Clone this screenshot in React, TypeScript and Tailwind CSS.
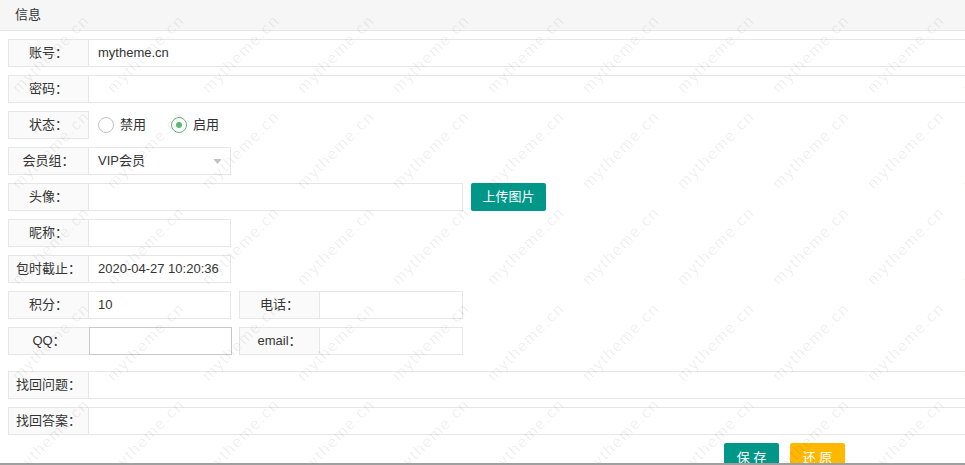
import type { ReactNode } from "react";

type FieldProps = {
  label: string;
  width: string;
  children?: ReactNode;
  focus?: boolean;
};

function Field({ label, width, children, focus }: FieldProps) {
  return (
    <div className={`flex h-[28px] shrink-0 ${width}`}>
      <div
        className={`flex h-full w-[81px] shrink-0 items-center justify-center border border-[#e6e6e6] bg-[#fafafa] ${focus ? "border-r-0" : ""}`}
      >
        {label}
      </div>
      <div
        className={`flex h-full min-w-0 flex-1 items-center pl-[9px] ${focus ? "border border-[#c9c9c9]" : "border border-l-0 border-[#e6e6e6]"}`}
      >
        {children}
      </div>
    </div>
  );
}

function Radio({ checked, label }: { checked?: boolean; label: string }) {
  return (
    <span className="flex items-center gap-[6px]">
      <span
        className={`flex h-[16px] w-[16px] items-center justify-center rounded-full border ${checked ? "border-[#5fb878]" : "border-[#c2c2c2]"}`}
      >
        {checked && <span className="h-[6px] w-[6px] rounded-full bg-[#5fb878]" />}
      </span>
      {label}
    </span>
  );
}

function Watermark() {
  const marks = [];
  for (let j = -1; j < 6; j++) {
    for (let i = -1; i < 11; i++) {
      marks.push(
        <span
          key={`${i}-${j}`}
          className="absolute whitespace-nowrap text-[16px] tracking-[1.5px] text-black/[0.07]"
          style={{
            left: 51 + 95 * i,
            top: 54 + 96 * j,
            transform: "translate(-50%, -50%) rotate(-45deg)",
          }}
        >
          mytheme.cn
        </span>,
      );
    }
  }
  return <div className="pointer-events-none absolute inset-0 overflow-hidden">{marks}</div>;
}

export default function App() {
  return (
    <div className="relative h-[465px] w-full overflow-hidden bg-white font-['Liberation_Sans','Noto_Sans_CJK_SC',sans-serif] text-[13px] text-[#333]">
      <div className="flex h-[31px] items-center border-b border-[#e6e6e6] bg-[#f6f6f6] pl-[15px]">
        信息
      </div>

      <div className="flex flex-col gap-[8px] px-[8px] pt-[8px]">
        <Field label="账号：" width="w-[1000px]">
          mytheme.cn
        </Field>
        <Field label="密码：" width="w-[1000px]" />
        <div className="flex h-[28px] items-center">
          <div className="flex h-full w-[81px] items-center justify-center border border-[#e6e6e6] bg-[#fafafa]">
            状态：
          </div>
          <div className="flex items-center gap-[25px] pl-[9px]">
            <Radio label="禁用" />
            <Radio checked label="启用" />
          </div>
        </div>
        <Field label="会员组：" width="w-[223px]">
          <span className="flex-1">VIP会员</span>
          <svg viewBox="0 0 10 6" className="mr-[8px] h-[5px] w-[9px] text-[#c2c2c2]" fill="currentColor">
            <path d="M0 0h10L5 6z" />
          </svg>
        </Field>
        <div className="flex gap-[8px]">
          <Field label="头像：" width="w-[455px]" />
          <button className="h-[28px] w-[75px] rounded-[2px] bg-[#009688] text-white">
            上传图片
          </button>
        </div>
        <Field label="昵称：" width="w-[223px]" />
        <Field label="包时截止：" width="w-[223px]">
          2020-04-27 10:20:36
        </Field>
        <div className="flex gap-[8px]">
          <Field label="积分：" width="w-[223px]">
            10
          </Field>
          <Field label="电话：" width="w-[224px]" />
        </div>
        <div className="flex gap-[7px]">
          <Field label="QQ：" width="w-[224px]" focus />
          <Field label="email：" width="w-[224px]" />
        </div>
        <div className="mt-[8px]">
          <Field label="找回问题：" width="w-[1000px]" />
        </div>
        <Field label="找回答案：" width="w-[1000px]" />
        <div className="flex gap-[11px] pl-[716px]">
          <button className="h-[30px] w-[55px] rounded-[2px] bg-[#009688] text-white">
            保 存
          </button>
          <button className="h-[30px] w-[55px] rounded-[2px] bg-[#ffb800] text-white">
            还 原
          </button>
        </div>
      </div>

      <Watermark />
      <div className="absolute bottom-0 left-0 right-0 h-[2px] bg-[#a0a0a0]" />
    </div>
  );
}
